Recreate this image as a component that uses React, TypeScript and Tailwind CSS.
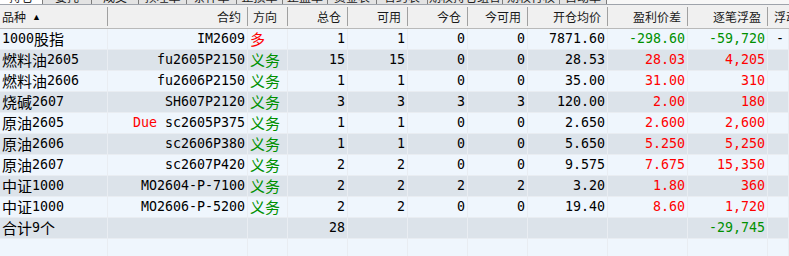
import React from 'react';

const MONO = "font-['DejaVu_Sans_Mono',monospace] text-[13.3px]";
const CJK = "font-['Noto_Sans_CJK_SC',sans-serif] text-[15px]";

function T({ s }: { s: string }) {
  const parts = s.split(/([\u3000-\u9fff\uff00-\uffef]+)/).filter(p => p !== '');
  return (
    <>
      {parts.map((p, i) =>
        /[\u3000-\u9fff\uff00-\uffef]/.test(p) ? (
          <span key={i} className={CJK}>{p}</span>
        ) : (
          <span key={i} className={MONO + ' whitespace-pre'}>{p}</span>
        )
      )}
    </>
  );
}

const tabs = [
  { w: 43, label: '持仓' },
  { w: 49, label: '委托' },
  { w: 47, label: '成交' },
  { w: 48, label: '预埋单' },
  { w: 50, label: '条件单' },
  { w: 46, label: '止损单' },
  { w: 45, label: '止盈单' },
  { w: 49, label: '资金表' },
  { w: 51, label: '合约表' },
  { w: 75, label: '期权持仓组合' },
  { w: 57, label: '期权行权' },
  { w: 47, label: '自动单' },
];

const headers = ['合约', '方向', '总仓', '可用', '今仓', '今可用', '开仓均价', '盈利价差', '逐笔浮盈'];

type Row = {
  name: string;
  code: string;
  due?: boolean;
  dir: string;
  dirColor: string;
  total: string;
  avail: string;
  today: string;
  todayAvail: string;
  open: string;
  diff: string;
  pnl: string;
  pnlColor: string;
  extra?: string;
};

const RED = 'text-[#ff0000]';
const GREEN = 'text-[#009000]';

const rows: Row[] = [
  { name: '1000股指', code: 'IM2609', dir: '多', dirColor: RED, total: '1', avail: '1', today: '0', todayAvail: '0', open: '7871.60', diff: '-298.60', pnl: '-59,720', pnlColor: GREEN, extra: '-' },
  { name: '燃料油2605', code: 'fu2605P2150', dir: '义务', dirColor: GREEN, total: '15', avail: '15', today: '0', todayAvail: '0', open: '28.53', diff: '28.03', pnl: '4,205', pnlColor: RED },
  { name: '燃料油2606', code: 'fu2606P2150', dir: '义务', dirColor: GREEN, total: '1', avail: '1', today: '0', todayAvail: '0', open: '35.00', diff: '31.00', pnl: '310', pnlColor: RED },
  { name: '烧碱2607', code: 'SH607P2120', dir: '义务', dirColor: GREEN, total: '3', avail: '3', today: '3', todayAvail: '3', open: '120.00', diff: '2.00', pnl: '180', pnlColor: RED },
  { name: '原油2605', code: 'sc2605P375', due: true, dir: '义务', dirColor: GREEN, total: '1', avail: '1', today: '0', todayAvail: '0', open: '2.650', diff: '2.600', pnl: '2,600', pnlColor: RED },
  { name: '原油2606', code: 'sc2606P380', dir: '义务', dirColor: GREEN, total: '1', avail: '1', today: '0', todayAvail: '0', open: '5.650', diff: '5.250', pnl: '5,250', pnlColor: RED },
  { name: '原油2607', code: 'sc2607P420', dir: '义务', dirColor: GREEN, total: '2', avail: '2', today: '0', todayAvail: '0', open: '9.575', diff: '7.675', pnl: '15,350', pnlColor: RED },
  { name: '中证1000', code: 'MO2604-P-7100', dir: '义务', dirColor: GREEN, total: '2', avail: '2', today: '2', todayAvail: '2', open: '3.20', diff: '1.80', pnl: '360', pnlColor: RED },
  { name: '中证1000', code: 'MO2606-P-5200', dir: '义务', dirColor: GREEN, total: '2', avail: '2', today: '0', todayAvail: '0', open: '19.40', diff: '8.60', pnl: '1,720', pnlColor: RED },
];

const GRID = 'grid grid-cols-[108px_140px_40px_60px_60px_60px_60px_80px_80px_80px_1fr]';
const CELL = 'h-[21px] flex items-center overflow-hidden whitespace-nowrap border-r border-b border-[#e9edf2] text-black';
const R = CELL + ' justify-end pr-[2px]';
const L = CELL + ' pl-[2px]';

function DataRow({ r, i }: { r: Row; i: number }) {
  const bg = i % 2 === 0 ? 'bg-[#eff6fd]' : 'bg-[#dce3ea]';
  return (
    <div className={GRID + ' ' + bg}>
      <div className={L}><T s={r.name} /></div>
      <div className={R}>
        {r.due && <span className={MONO + ' text-[#ff0000] whitespace-pre'}>Due </span>}
        <T s={r.code} />
      </div>
      <div className={L}><span className={CJK + ' ' + r.dirColor}>{r.dir}</span></div>
      <div className={R}><T s={r.total} /></div>
      <div className={R}><T s={r.avail} /></div>
      <div className={R}><T s={r.today} /></div>
      <div className={R}><T s={r.todayAvail} /></div>
      <div className={R}><T s={r.open} /></div>
      <div className={R}><span className={MONO + ' ' + r.pnlColor}>{r.diff}</span></div>
      <div className={R}><span className={MONO + ' ' + r.pnlColor}>{r.pnl}</span></div>
      <div className={L + ' pl-[8px]'}>{r.extra && <span className={MONO}>{r.extra}</span>}</div>
    </div>
  );
}

export default function App() {
  return (
    <div className="w-[789px] h-[256px] overflow-hidden bg-[#eff6fd] select-none">
      {/* tab strip, mostly scrolled out of view */}
      <div className="flex h-[4px] overflow-hidden bg-[#f7f7f7]">
        {tabs.map((t, i) => (
          <div
            key={i}
            style={{ width: t.w }}
            className={
              'shrink-0 flex justify-center border-r border-[#7d7d7d] ' +
              (i === 0 ? 'bg-white' : 'bg-[#e3e3e3]')
            }
          >
            <span className="font-['Noto_Sans_CJK_SC',sans-serif] text-[12px] leading-[12px] mt-[-9px] text-[#222]">
              {t.label}
            </span>
          </div>
        ))}
      </div>
      <div className="h-[1px] bg-[#9ea3ab]" />

      {/* header */}
      <div className={GRID + ' h-[24px] items-center bg-[#f0f0f0] border-b border-[#b9b9b9]'}>
        <div className="h-[19px] flex items-center gap-[6px] pl-[2px] border-r border-[#a0a0a0]">
          <span className="font-['Noto_Sans_CJK_SC',sans-serif] text-[12px] text-[#1a1a1a]">品种</span>
          <span className="text-[9px] leading-none text-black">▲</span>
        </div>
        {headers.map((h, i) => (
          <div
            key={i}
            className={
              'h-[19px] flex items-center border-r border-[#a0a0a0] ' +
              (h === '方向' ? 'pl-[5px]' : 'justify-end pr-[6px]')
            }
          >
            <span className="font-['Noto_Sans_CJK_SC',sans-serif] text-[12px] text-[#1a1a1a]">{h}</span>
          </div>
        ))}
        <div className="h-[19px] flex items-center pl-[6px] overflow-hidden whitespace-nowrap">
          <span className="font-['Noto_Sans_CJK_SC',sans-serif] text-[12px] text-[#1a1a1a]">浮动盈亏</span>
        </div>
      </div>

      {rows.map((r, i) => (
        <DataRow key={i} r={r} i={i} />
      ))}

      {/* total row */}
      <div className={GRID + ' bg-[#dce3ea]'}>
        <div className={L}><T s="合计9个" /></div>
        <div className={R} />
        <div className={L} />
        <div className={R}><T s="28" /></div>
        <div className={R} />
        <div className={R} />
        <div className={R} />
        <div className={R} />
        <div className={R} />
        <div className={R}><span className={MONO + ' ' + GREEN}>-29,745</span></div>
        <div className={L} />
      </div>

      {/* empty row */}
      <div className={GRID + ' bg-[#eff6fd]'}>
        {Array.from({ length: 11 }).map((_, i) => (
          <div key={i} className={CELL} />
        ))}
      </div>
    </div>
  );
}
